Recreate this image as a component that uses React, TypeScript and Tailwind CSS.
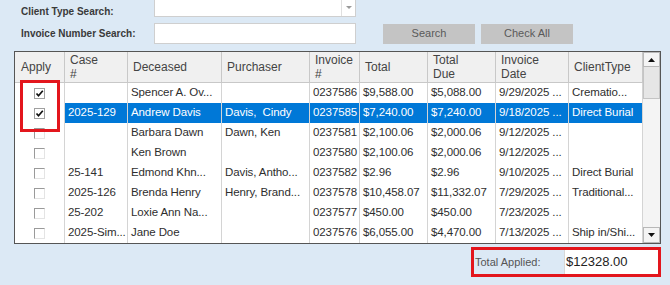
import { Fragment } from "react";

type Row = {
  checked: boolean;
  selected?: boolean;
  cells: string[];
};

const columns = ["Case\n#", "Deceased", "Purchaser", "Invoice\n#", "Total", "Total\nDue", "Invoice\nDate", "ClientType"];

const rows: Row[] = [
  { checked: true, cells: ["", "Spencer A. Ov...", "", "0237586", "$9,588.00", "$5,088.00", "9/29/2025 ...", "Crematio..."] },
  { checked: true, selected: true, cells: ["2025-129", "Andrew Davis", "Davis,  Cindy", "0237585", "$7,240.00", "$7,240.00", "9/18/2025 ...", "Direct Burial"] },
  { checked: false, cells: ["", "Barbara Dawn", "Dawn, Ken", "0237581", "$2,100.06", "$2,000.06", "9/12/2025 ...", ""] },
  { checked: false, cells: ["", "Ken Brown", "", "0237580", "$2,100.06", "$2,000.06", "9/12/2025 ...", ""] },
  { checked: false, cells: ["25-141", "Edmond Khn...", "Davis, Antho...", "0237582", "$2.96", "$2.96", "9/10/2025 ...", "Direct Burial"] },
  { checked: false, cells: ["2025-126", "Brenda Henry", "Henry, Brand...", "0237578", "$10,458.07", "$11,332.07", "7/29/2025 ...", "Traditional..."] },
  { checked: false, cells: ["25-202", "Loxie Ann Na...", "", "0237577", "$450.00", "$450.00", "7/23/2025 ...", ""] },
  { checked: false, cells: ["2025-Sim...", "Jane Doe", "", "0237576", "$6,055.00", "$4,470.00", "7/13/2025 ...", "Ship in/Shi..."] },
];

const CheckBox = ({ checked }: { checked: boolean }) =>
  checked ? (
    <div className="w-[11px] h-[11px] bg-white border border-[#a0a0a0] flex items-center justify-center">
      <svg width="9" height="9" viewBox="0 0 9 9">
        <path d="M1.5 4.5 L3.5 6.8 L7.8 1.8" stroke="#111" strokeWidth="1.7" fill="none" />
      </svg>
    </div>
  ) : (
    <div className="w-[11px] h-[11px] bg-white border-t border-l border-[#9a9a9a] border-r border-b border-r-[#e4e4e4] border-b-[#e4e4e4]" />
  );

const Arrow = ({ down }: { down?: boolean }) => (
  <svg width="7" height="4" viewBox="0 0 7 4">
    <path d={down ? "M0 0 H7 L3.5 4 Z" : "M0 4 H7 L3.5 0 Z"} fill="#111" />
  </svg>
);

export default function App() {
  return (
    <div className="relative w-[670px] h-[285px] overflow-hidden bg-[#dce9f5] font-['Liberation_Sans',Arial,sans-serif]">
      {/* Search form */}
      <div className="pl-[21px]">
        <div className="flex items-start h-[17px]">
          <div className="w-[133px] pt-[4px] text-[10px] font-bold text-[#3a3a3a]">Client Type Search:</div>
          <div className="-mt-[4px] w-[202px] h-[21px] bg-white border border-[#cfcfcf] flex justify-end">
            <div className="w-[14px] h-full border-l border-[#e0e0e0] flex justify-center pt-[9px]">
              <svg width="6" height="3" viewBox="0 0 6 3">
                <path d="M0 0 H6 L3 3 Z" fill="#9a9a9a" />
              </svg>
            </div>
          </div>
        </div>
        <div className="flex items-center h-[21px] mt-[6px]">
          <div className="w-[133px] text-[10px] font-bold text-[#3a3a3a]">Invoice Number Search:</div>
          <div className="w-[202px] h-[21px] bg-white border border-[#cfcfcf]" />
          <button className="ml-[27px] w-[92px] h-[20px] bg-[#c4c4c4] text-[11px] text-[#5a5a5a]">Search</button>
          <button className="ml-[6px] w-[92px] h-[20px] bg-[#c4c4c4] text-[11px] text-[#5a5a5a]">Check All</button>
        </div>
      </div>

      {/* Grid */}
      <div className="relative ml-[14px] mt-[7px] w-[647px] border border-[#555] bg-white flex">
        <div className="grid grid-cols-[50px_63px_94px_88px_50px_68px_68px_73px_74px] text-[12px]">
          <div className="h-[31px] px-[6px] flex items-center bg-[#f0f0f0] border-r border-b border-[#c8c8c8] text-[#444]">Apply</div>
          {columns.map((c) => (
            <div
              key={c}
              className="h-[31px] pl-[5px] flex items-center bg-[#f0f0f0] border-r border-b border-[#c8c8c8] text-[#444] leading-[14px] whitespace-pre-line"
            >
              {c}
            </div>
          ))}
          {rows.map((r, i) => (
            <Fragment key={i}>
              <div className="h-[20px] bg-white border-r border-[#d4d4d4] flex items-center justify-center">
                <CheckBox checked={r.checked} />
              </div>
              {r.cells.map((c, j) => (
                <div
                  key={j}
                  className={`h-[20px] pl-[3px] flex items-center whitespace-pre overflow-hidden border-r border-[#d4d4d4] text-[11.5px] tracking-[-0.1px] ${
                    r.selected ? "bg-[#0078d7] text-white" : "bg-white text-[#2e2e2e]"
                  }`}
                >
                  {c}
                </div>
              ))}
            </Fragment>
          ))}
        </div>

        {/* Scrollbar */}
        <div className="w-[17px] bg-[#f4f4f4] flex flex-col">
          <div className="h-[15px] bg-[#f4f4f4] border border-[#b8b8b8] flex items-center justify-center">
            <Arrow />
          </div>
          <div className="h-[32px] bg-[#e6e6e6] border border-t-0 border-[#c4c4c4]" />
          <div className="flex-1" />
          <div className="h-[16px] bg-[#f4f4f4] border border-[#b8b8b8] flex items-center justify-center">
            <Arrow down />
          </div>
        </div>

        {/* Highlight on checked rows */}
        <div className="absolute left-[5px] top-[28px] w-[40px] h-[52px] border-[3px] border-[#e3161d]" />
      </div>

      {/* Total applied */}
      <div className="flex justify-end pr-[9px] mt-[3px]">
        <div className="w-[190px] h-[30px] border-[3px] border-[#e3161d] flex items-stretch">
          <div className="flex-1 pl-[1px] flex items-center text-[11px] text-[#555]">Total Applied:</div>
          <div className="w-[94px] bg-white border-l border-[#d8d8d8] pl-[1px] flex items-center text-[13px] text-[#222]">
            $12328.00
          </div>
        </div>
      </div>
    </div>
  );
}
